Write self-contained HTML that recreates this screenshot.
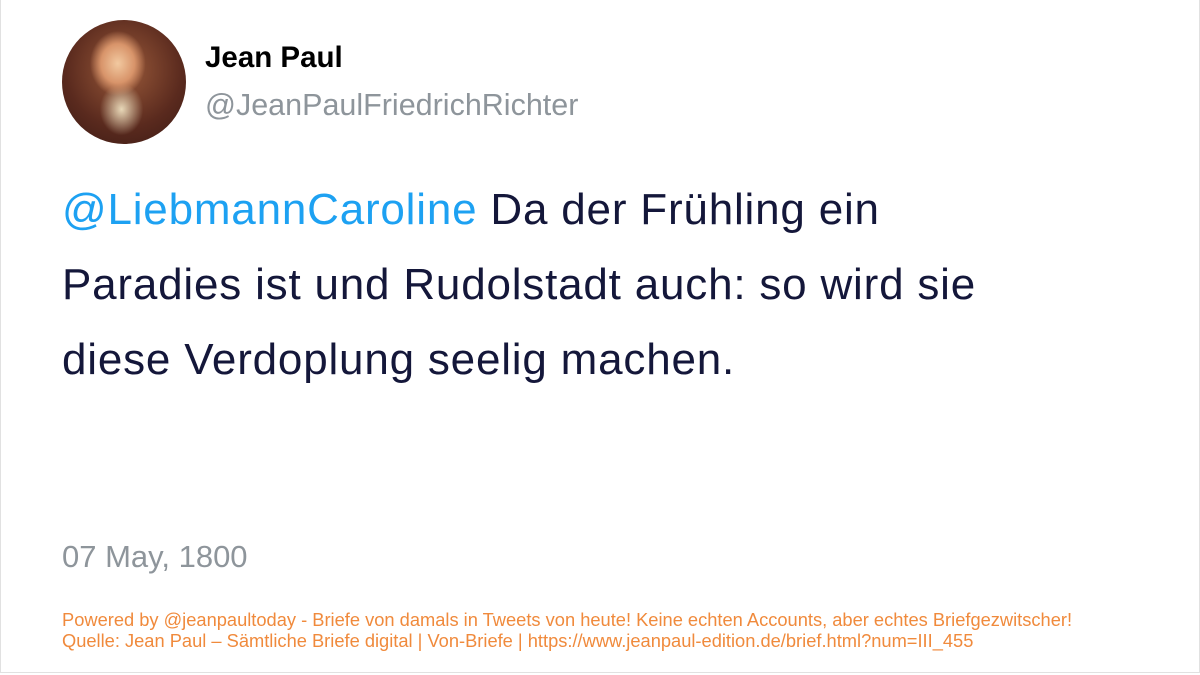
<!DOCTYPE html>
<html><head><meta charset="utf-8"><style>
html,body{margin:0;padding:0;background:#fff;}
body{width:1200px;height:675px;position:relative;overflow:hidden;font-family:"Liberation Sans",sans-serif;}
.frame{position:absolute;left:0;top:0;width:1198px;height:672px;border:1px solid #e1e1e1;border-top:none;}
.av{position:absolute;left:62px;top:20px;width:124px;height:124px;border-radius:50%;
background:radial-gradient(ellipse 30% 35% at 45% 35%,#f2c9a0 0%,#d8946a 45%,transparent 75%),
radial-gradient(ellipse 25% 30% at 48% 72%,#e8d8b8 0%,transparent 70%),
radial-gradient(circle at 50% 40%,#9a5a3a 0%,#5a2a1e 60%,#3a1a14 100%);}
.name{position:absolute;left:205px;top:41px;font-size:29.5px;font-weight:bold;color:#000;}
.handle{position:absolute;left:205px;top:88px;font-size:30.5px;color:#8e959b;}
.tw{position:absolute;left:62px;top:172px;width:1100px;font-size:44px;letter-spacing:0.8px;line-height:75px;color:#14173a;}
.tw a{color:#1da1f2;text-decoration:none;}
.date{position:absolute;left:62px;top:539px;font-size:31px;color:#8e959b;}
.foot{position:absolute;left:62px;top:609px;font-size:18.3px;line-height:21px;color:#f08a3c;white-space:nowrap;}
</style></head><body>
<div class="frame"></div>
<div class="av"></div>
<div class="name">Jean Paul</div>
<div class="handle">@JeanPaulFriedrichRichter</div>
<div class="tw"><a>@LiebmannCaroline</a> Da der Frühling ein<br>Paradies ist und Rudolstadt auch: so wird sie<br>diese Verdoplung seelig machen.</div>
<div class="date">07 May, 1800</div>
<div class="foot">Powered by @jeanpaultoday - Briefe von damals in Tweets von heute! Keine echten Accounts, aber echtes Briefgezwitscher!<br>Quelle: Jean Paul – Sämtliche Briefe digital | Von-Briefe | https://www.jeanpaul-edition.de/brief.html?num=III_455</div>
</body></html>
